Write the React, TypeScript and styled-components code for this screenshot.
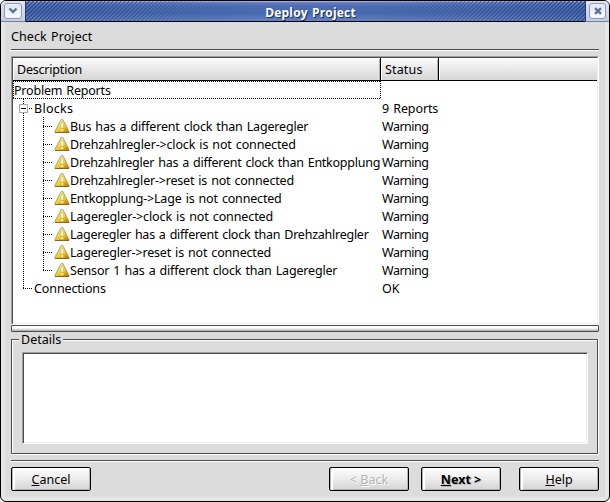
import React from "react";
import styled, { createGlobalStyle, css } from "styled-components";

const Global = createGlobalStyle`
  * { box-sizing: border-box; }
  html, body { margin: 0; background: #fff; }
  body {
    font: 12.5px/18px "Noto Sans", "Open Sans", sans-serif;
    word-spacing: 1px;
    color: #000;
    overflow: hidden;
  }
`;

const Window = styled.div`
  width: 610px;
  height: 502px;
  border: 1px solid #000;
  border-radius: 6px;
  overflow: hidden;
  background: #e6e6e6;
  display: flex;
  flex-direction: column;
`;

const TitleBar = styled.header`
  height: 21px;
  flex: none;
  display: flex;
  border-bottom: 1px solid #000;
  background: linear-gradient(#a5aedb 0 1px, #6a83c4 1px, #4d6cb2 5px, #4669ae 12px, #6482c2 20px);
`;

const TitleCap = styled.div<{ $right?: boolean }>`
  width: ${(p) => (p.$right ? 24 : 25)}px;
  height: 21px;
  flex: none;
  padding: 2px 0 0 3px;
  background: linear-gradient(#e2e6f2, #c6cde2);
  border-bottom: 1px solid #6d7fa3;
  ${(p) => (p.$right ? "border-left" : "border-right")}: 1px solid #25376a;
`;

const TitleButton = styled.button<{ $small?: boolean }>`
  display: flex;
  align-items: center;
  justify-content: center;
  width: ${(p) => (p.$small ? 17 : 18)}px;
  height: 16px;
  padding: 0;
  border: 1px solid #8d98b4;
  border-radius: 3px;
  background: linear-gradient(#dfe5f3, #fafbff);
  box-shadow: inset 0 0 0 1px #edf0f9;
`;

const Hatch = styled.div<{ $right?: boolean }>`
  flex: 1;
  background: repeating-linear-gradient(135deg, transparent 0 1.7px, #2a4787 1.9px 2.83px);
  mask-image: linear-gradient(${(p) => (p.$right ? "to left" : "to right")}, rgba(0, 0, 0, 0.8), transparent);
`;

const Title = styled.h1`
  margin: 0;
  padding: 2px 0 0 10px;
  width: 104px;
  text-align: center;
  white-space: nowrap;
  font: bold 12px/20px "Open Sans", "Noto Sans", sans-serif;
  letter-spacing: 0.17px;
  color: #fff;
  text-shadow: 1px 1px 0 #1c2c5c;
`;

const Body = styled.main`
  flex: 1;
  margin: 0 4px 4px 4px;
  padding: 0 6px;
  background: #dcdcdc;
  display: flex;
  flex-direction: column;
`;

const PageTitle = styled.h2`
  margin: 0;
  height: 27px;
  padding-top: 6px;
  font-size: 12.5px;
  line-height: 18px;
  font-weight: 400;
  letter-spacing: 0.08px;
`;

const Rule = styled.div<{ $top?: number }>`
  height: 2px;
  flex: none;
  margin-top: ${(p) => p.$top ?? 0}px;
  background: #4c4c4c;
  border-bottom: 1px solid #fff;
`;

const TreeView = styled.section`
  height: 269px;
  margin-top: 5px;
  border: 1px solid;
  border-color: #a0a0a0 #fff #fff #a0a0a0;
`;

const TreeInner = styled.div`
  height: 267px;
  border: 1px solid;
  border-color: #4c4c4c #efefef #efefef #4c4c4c;
  background: #fff;
`;

const HeaderRow = styled.div`
  display: grid;
  grid-template-columns: 368px 58px 1fr;
  height: 23px;
  border-bottom: 1px solid #000;
`;

const HeaderCell = styled.div<{ $last?: boolean }>`
  padding: 3px 0 0 4px;
  background: linear-gradient(#fdfdfd, #f0f0f0 30%, #d6d6d6);
  box-shadow: inset 1px 1px 0 #fff;
  ${(p) =>
    !p.$last &&
    css`
      border-right: 1px solid #000;
      box-shadow: inset 1px 1px 0 #fff, inset -1px 0 0 #b4b4b4;
    `}
`;

const Row = styled.div`
  display: grid;
  grid-template-columns: 368px 1fr;
  height: 18px;
  line-height: 20px;
  white-space: nowrap;
`;

const dotsX = "repeating-linear-gradient(90deg, #000 0 1px, transparent 1px 2px)";
const dotsY = "repeating-linear-gradient(#000 0 1px, transparent 1px 2px)";

const Name = styled.div<{ $focus?: boolean }>`
  display: flex;
  min-width: 0;
  height: 18px;
  padding-left: 1px;
  ${(p) =>
    p.$focus &&
    css`
      background: ${dotsX} 0 0 / 100% 1px no-repeat, ${dotsX} 0 100% / 100% 1px no-repeat,
        ${dotsY} 0 0 / 1px 100% no-repeat, ${dotsY} 100% 0 / 1px 100% no-repeat;
    `}
`;

const Guide = styled.span<{ $kind: "through" | "tee" | "end" | "box" }>`
  width: 20px;
  height: 18px;
  flex: none;
  display: flex;
  align-items: flex-start;
  padding: 5px 0 0 5px;
  background: ${(p) => (p.$kind === "through" ? "none" : `${dotsX} 9px 9px / 10px 1px no-repeat`)},
    ${dotsY} 9px 0 / 1px ${(p) => (p.$kind === "end" ? 10 : 18)}px no-repeat;
`;

const Expander = styled.span`
  width: 9px;
  height: 9px;
  border: 1px solid #a8a8a8;
  background: linear-gradient(#000, #000) center / 5px 1px no-repeat #fff;
`;

const Text = styled.span<{ $track?: number }>`
  letter-spacing: ${(p) => p.$track ?? 0}px;
`;

const Status = styled.div`
  padding-left: 1px;
`;

const SplitHandle = styled.div`
  width: 588px;
  height: 7px;
  flex: none;
  border: 1px solid #4c4c4c;
  border-radius: 1px;
  background: linear-gradient(#fff 0 2px, #e4e4e4 3px, #a8a8a8 5px);
`;

const Details = styled.fieldset`
  width: 588px;
  height: 123px;
  flex: none;
  margin: 0;
  padding: 0 10px 10px;
  min-width: 0;
  border: 0;
  display: grid;
  grid-template-rows: 20px 92px;
  background: linear-gradient(#4c4c4c, #4c4c4c) 0 7px / 587px 1px no-repeat,
    linear-gradient(#4c4c4c, #4c4c4c) 0 7px / 1px 115px no-repeat,
    linear-gradient(#4c4c4c, #4c4c4c) 586px 7px / 1px 115px no-repeat,
    linear-gradient(#4c4c4c, #4c4c4c) 0 121px / 587px 1px no-repeat,
    linear-gradient(#fff, #fff) 1px 8px / 585px 1px no-repeat,
    linear-gradient(#fff, #fff) 1px 8px / 1px 113px no-repeat,
    linear-gradient(#fff, #fff) 587px 7px / 1px 116px no-repeat,
    linear-gradient(#fff, #fff) 0 122px / 100% 1px no-repeat;
`;

const DetailsLabel = styled.span`
  justify-self: start;
  height: 16px;
  margin-left: -2px;
  padding: 0 2px;
  line-height: 15px;
  background: #dcdcdc;
`;

const DetailsBox = styled.div`
  width: 566px;
  height: 92px;
  margin-left: 1px;
  background: #fff;
  border: 1px solid;
  border-color: #a0a0a0 #fff #fff #a0a0a0;
  box-shadow: inset 1px 1px 0 #4c4c4c, inset -1px -1px 0 #efefef;
`;

const Footer = styled.footer`
  display: grid;
  grid-template-columns: 80px 1fr 80px 12px 80px 18px 80px;
  padding-top: 5px;
`;

const Button = styled.button<{ $primary?: boolean; $col: number }>`
  grid-column: ${(p) => p.$col};
  height: 24px;
  padding: 2px 0 0;
  border: 1px solid #000;
  border-radius: 2px;
  background: linear-gradient(#fdfdfd, #eee 45%, #d4d4d4);
  box-shadow: inset 1px 0 0 #b4b4b4, inset 3px 1px 0 #fff, inset -1px -1px 0 #b4b4b4;
  font: ${(p) => (p.$primary ? 700 : 400)} 12.5px/18px "Noto Sans", sans-serif;
  color: #000;
  text-shadow: ${(p) => (p.$primary ? "1px 1px 0 #b8b8b8" : "none")};

  &:disabled {
    color: #b4b4b4;
    text-shadow: 1px 1px 0 #fff;
  }
`;

const WarningIcon = styled(({ className }: { className?: string }) => (
  <svg className={className} width="16" height="18" viewBox="0 0 16 18">
    <defs>
      <linearGradient id="amber" x1="0" y1="0" x2=".8" y2="1">
        <stop offset="0" stopColor="#fffbd0" />
        <stop offset=".4" stopColor="#fbe04a" />
        <stop offset=".7" stopColor="#efc01c" />
        <stop offset="1" stopColor="#b98300" />
      </linearGradient>
    </defs>
    <path d="M7.2 2.5h1.6L15 14.3v1.2H.9v-1.2z" fill="url(#amber)" stroke="#a3a19a" strokeLinejoin="round" />
    <path d="M1 15.5h14" stroke="#8a6a14" />
    <path d="M7 6h2.4v5H7zM7 12h2.4v2.2H7z" fill="#fff" stroke="#c9a53a" strokeWidth=".4" />
  </svg>
))`
  flex: none;
`;

const reports: [string, number][] = [
  ["Bus has a different clock than Lageregler", -0.18],
  ["Drehzahlregler->clock is not connected", -0.15],
  ["Drehzahlregler has a different clock than Entkopplung", -0.25],
  ["Drehzahlregler->reset is not connected", -0.2],
  ["Entkopplung->Lage is not connected", -0.18],
  ["Lageregler->clock is not connected", -0.12],
  ["Lageregler has a different clock than Drehzahlregler", -0.25],
  ["Lageregler->reset is not connected", -0.18],
  ["Sensor 1 has a different clock than Lageregler", -0.18],
];

export default function App() {
  return (
    <>
      <Global />
      <Window>
        <TitleBar>
          <TitleCap>
            <TitleButton aria-label="Menu">
              <svg width="10" height="8" viewBox="0 0 10 8">
                <path d="M1.5 1.5L5 5l3.5-3.5" fill="none" stroke="#5f7095" strokeWidth="2.4" />
              </svg>
            </TitleButton>
          </TitleCap>
          <Hatch />
          <Title>Deploy Project</Title>
          <Hatch $right />
          <TitleCap $right>
            <TitleButton $small aria-label="Close">
              <svg width="8" height="8" viewBox="0 0 8 8">
                <path d="M1 1.2l6 5.6M7 1.2L1 6.8" stroke="#5f7095" strokeWidth="2.4" />
              </svg>
            </TitleButton>
          </TitleCap>
        </TitleBar>
        <Body>
          <PageTitle>Check Project</PageTitle>
          <Rule />
          <TreeView>
            <TreeInner>
              <HeaderRow>
                <HeaderCell>
                  <Text $track={-0.2}>Description</Text>
                </HeaderCell>
                <HeaderCell>
                  <Text $track={0.15}>Status</Text>
                </HeaderCell>
                <HeaderCell $last />
              </HeaderRow>
              <Row>
                <Name $focus>
                  <Text $track={-0.2}>Problem Reports</Text>
                </Name>
              </Row>
              <Row>
                <Name>
                  <Guide $kind="box">
                    <Expander />
                  </Guide>
                  <Text $track={0.3}>Blocks</Text>
                </Name>
                <Status>
                  <Text $track={-0.1}>9 Reports</Text>
                </Status>
              </Row>
              {reports.map(([label, track], i) => (
                <Row key={label}>
                  <Name>
                    <Guide $kind="through" />
                    <Guide $kind={i === reports.length - 1 ? "end" : "tee"} />
                    <WarningIcon />
                    <Text $track={track}>{label}</Text>
                  </Name>
                  <Status>
                    <Text $track={-0.5}>Warning</Text>
                  </Status>
                </Row>
              ))}
              <Row>
                <Name>
                  <Guide $kind="end" />
                  <Text $track={-0.1}>Connections</Text>
                </Name>
                <Status>OK</Status>
              </Row>
            </TreeInner>
          </TreeView>
          <SplitHandle />
          <Details>
            <DetailsLabel>Details</DetailsLabel>
            <DetailsBox />
          </Details>
          <Rule $top={5} />
          <Footer>
            <Button $col={1}>
              <u>C</u>ancel
            </Button>
            <Button $col={3} disabled>
              &lt; <u>B</u>ack
            </Button>
            <Button $col={5} $primary>
              <u>N</u>ext &gt;
            </Button>
            <Button $col={7}>
              <u>H</u>elp
            </Button>
          </Footer>
        </Body>
      </Window>
    </>
  );
}
